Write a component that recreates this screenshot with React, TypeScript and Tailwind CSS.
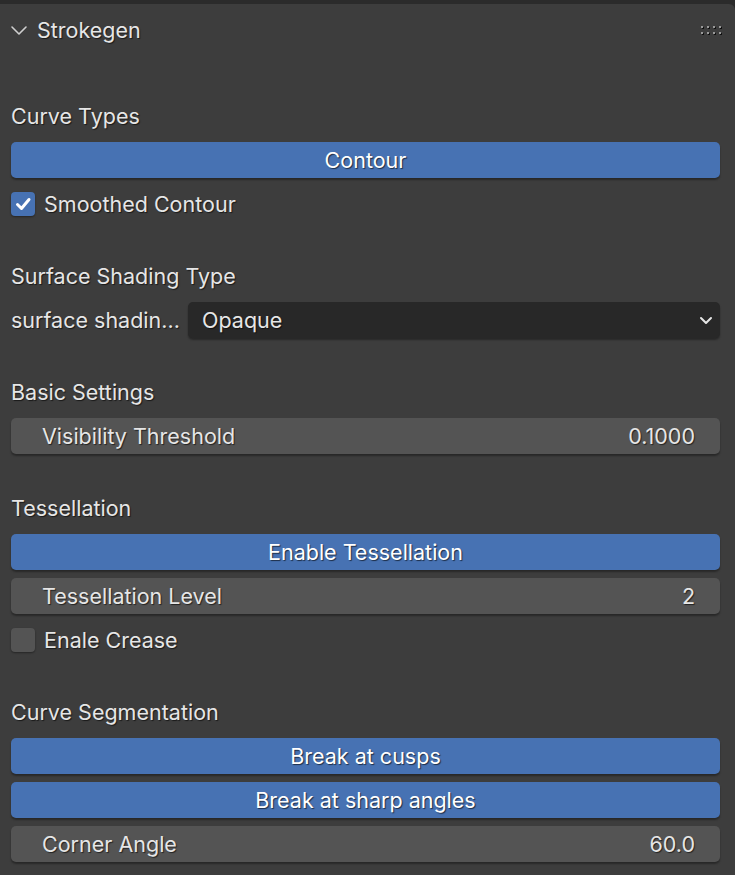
import { ReactNode } from "react";

const shadow = "[text-shadow:1px_1px_1px_rgba(0,0,0,0.6)]";
const txt = "text-[21.5px]";

function Label({ children }: { children: ReactNode }) {
  return (
    <div className={`h-9 flex items-center ${txt} text-[#e6e6e6] ${shadow}`}>
      {children}
    </div>
  );
}

function BlueButton({ children }: { children: ReactNode }) {
  return (
    <button
      className={`h-9 w-full rounded-[5px] bg-[#4772b3] ${txt} text-white shadow-[0_2px_2px_rgba(0,0,0,0.35)] ${shadow}`}
    >
      {children}
    </button>
  );
}

function Slider({ label, value }: { label: string; value: string }) {
  return (
    <div
      className={`h-9 w-full rounded-[5px] bg-[#545454] flex items-center justify-between pl-[31px] pr-[25px] ${txt} text-[#e6e6e6] shadow-[0_2px_2px_rgba(0,0,0,0.35)] ${shadow}`}
    >
      <span>{label}</span>
      <span>{value}</span>
    </div>
  );
}

function Check({ checked, label }: { checked: boolean; label: string }) {
  return (
    <div className="h-9 flex items-center gap-[9px]">
      <div
        className={`w-6 h-6 rounded-[4px] flex items-center justify-center shadow-[0_1px_2px_rgba(0,0,0,0.4)] ${
          checked ? "bg-[#4772b3]" : "bg-[#545454]"
        }`}
      >
        {checked && (
          <svg width="18" height="18" viewBox="0 0 18 18">
            <path
              d="M3.5 9.5 L7.5 13.5 L15 4.5"
              fill="none"
              stroke="white"
              strokeWidth="3"
              strokeLinecap="round"
              strokeLinejoin="round"
            />
          </svg>
        )}
      </div>
      <span className={`${txt} text-[#e6e6e6] ${shadow}`}>{label}</span>
    </div>
  );
}

function Grip() {
  const cols = [0, 6, 12, 18];
  return (
    <svg width="22" height="10" viewBox="0 0 22 10">
      {[0, 6].map((y) =>
        cols.map((x) => (
          <g key={`${x}-${y}`}>
            <rect x={x + 1} y={y + 1} width="2" height="2" fill="#111" />
            <rect x={x} y={y} width="2" height="2" fill="#9a9a9a" />
          </g>
        ))
      )}
    </svg>
  );
}

export default function App() {
  return (
    <div
      className="w-[735px] h-[875px] bg-[#2b2b2b] pt-1 overflow-hidden"
      style={{ fontFamily: "Inter, 'Noto Sans', sans-serif" }}
    >
      <div className="h-full bg-[#3d3d3d] rounded-tr-[6px]">
        <div className="h-[52px] flex items-center pl-[10px] pr-[12px]">
          <svg width="18" height="18" viewBox="0 0 18 18" className="mr-[9px]">
            <path
              d="M2 6 L9 13 L16 6"
              fill="none"
              stroke="#cfcfcf"
              strokeWidth="1.6"
              strokeLinecap="round"
              strokeLinejoin="round"
            />
          </svg>
          <span className={`${txt} text-[#e6e6e6] ${shadow}`}>Strokegen</span>
          <div className="ml-auto mt-[2px]">
            <Grip />
          </div>
        </div>

        <div className="flex flex-col gap-2 pl-[11px] pr-[15px] pt-[42px]">
          <Label>Curve Types</Label>
          <BlueButton>Contour</BlueButton>
          <Check checked label="Smoothed Contour" />

          <div className="h-[20px]" />
          <Label>Surface Shading Type</Label>
          <div className="h-9 flex items-center">
            <span className={`w-[177px] whitespace-nowrap ${txt} text-[#e6e6e6] ${shadow}`}>
              surface shadin...
            </span>
            <div className="flex-1 h-9 rounded-[5px] bg-[#282828] flex items-center pl-[14px] pr-[7px] shadow-[0_2px_2px_rgba(0,0,0,0.35)]">
              <span className={`${txt} text-[#e6e6e6] ${shadow}`}>Opaque</span>
              <svg width="14" height="14" viewBox="0 0 14 14" className="ml-auto">
                <path
                  d="M2 5 L7 10 L12 5"
                  fill="none"
                  stroke="#e6e6e6"
                  strokeWidth="2"
                  strokeLinecap="round"
                  strokeLinejoin="round"
                />
              </svg>
            </div>
          </div>

          <div className="h-[20px]" />
          <Label>Basic Settings</Label>
          <Slider label="Visibility Threshold" value="0.1000" />

          <div className="h-[20px]" />
          <Label>Tessellation</Label>
          <BlueButton>Enable Tessellation</BlueButton>
          <Slider label="Tessellation Level" value="2" />
          <Check checked={false} label="Enale Crease" />

          <div className="h-[20px]" />
          <Label>Curve Segmentation</Label>
          <BlueButton>Break at cusps</BlueButton>
          <BlueButton>Break at sharp angles</BlueButton>
          <Slider label="Corner Angle" value="60.0" />
        </div>
      </div>
    </div>
  );
}
